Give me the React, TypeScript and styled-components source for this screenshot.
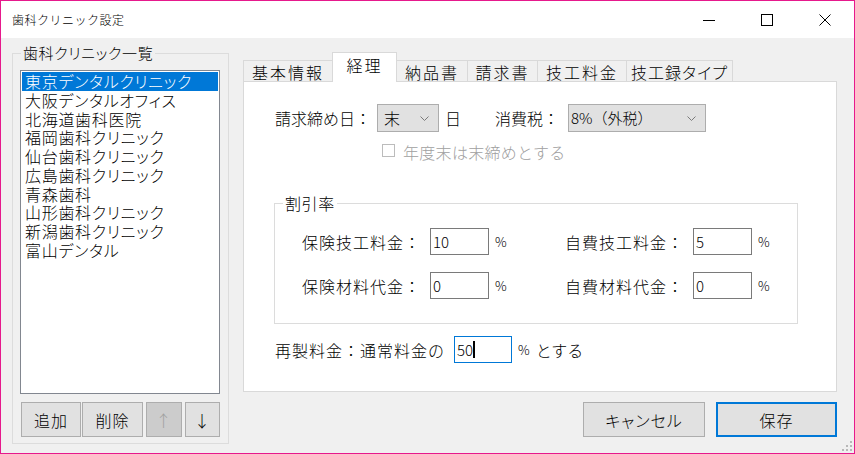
import React from 'react';
import styled, { createGlobalStyle, css } from 'styled-components';

const GlobalStyle = createGlobalStyle`
  html, body { margin: 0; padding: 0; background: #ffffff; }
  body { font-family: "Noto Sans CJK JP", "Noto Sans", sans-serif; color: #000; font-weight: 300; }
  * { box-sizing: border-box; }
`;

const FONT = `"Noto Sans CJK JP", "Noto Sans", sans-serif`;

const Window = styled.div`
  width: 855px;
  height: 454px;
  border: 1px solid #e6198c;
  display: flex;
  flex-direction: column;
  position: relative;
  background: #f0f0f0;
  overflow: hidden;
  font-family: ${FONT};
  font-weight: 300;
`;

const TitleBar = styled.div`
  height: 37px;
  background: #ffffff;
  display: flex;
  align-items: center;
  flex-shrink: 0;
`;

const Title = styled.div`
  flex: 1;
  padding-left: 11px;
  font-size: 12px;
  letter-spacing: 0.5px;
  line-height: 16px;
  padding-top: 1px;
`;

const Controls = styled.div`
  display: flex;
  height: 100%;
`;

const ControlButton = styled.div`
  width: 58px;
  height: 100%;
  display: flex;
  align-items: center;
  justify-content: center;
`;

const Body = styled.div`
  flex: 1;
  display: flex;
  padding: 14px 0 0 11px;
`;

const GroupBox = styled.div<{ $w: number; $h: number }>`
  position: relative;
  width: ${p => p.$w}px;
  height: ${p => p.$h}px;
  border: 1px solid #dcdcdc;
  flex-shrink: 0;
`;

const Legend = styled.span<{ $size: number; $bg: string }>`
  position: absolute;
  top: -11px;
  left: 8px;
  padding: 0 2px;
  line-height: 20px;
  font-size: ${p => p.$size}px;
  background: ${p => p.$bg};
  font-feature-settings: "palt";
  letter-spacing: 0.6px;
`;

const LeftGroup = styled(GroupBox)`
  margin-top: 1px;
  padding: 16px 8px 0 7px;
  display: flex;
  flex-direction: column;
`;

const ListBox = styled.div`
  height: 324px;
  border: 1px solid #828790;
  background: #ffffff;
  padding: 1px;
  display: flex;
  flex-direction: column;
`;

const ListItem = styled.div<{ $selected?: boolean }>`
  height: 18.75px;
  line-height: 18.75px;
  padding-left: 3px;
  font-size: 16px;
  font-feature-settings: "palt";
  letter-spacing: 0.7px;
  white-space: nowrap;
  ${p =>
    p.$selected &&
    css`
      background: #0078d7;
      color: #ffffff;
    `}
`;

const ListButtons = styled.div`
  display: flex;
  margin-top: 8px;
  padding-left: 1px;
`;

const Button = styled.div<{ $w: number; $gap?: number; $disabled?: boolean; $default?: boolean }>`
  width: ${p => p.$w}px;
  height: 35px;
  margin-left: ${p => p.$gap ?? 0}px;
  background: ${p => (p.$disabled ? '#cccccc' : '#e1e1e1')};
  border: ${p => (p.$default ? '2px solid #0078d7' : '1px solid #adadad')};
  color: ${p => (p.$disabled ? '#a0a0a0' : '#000000')};
  display: flex;
  align-items: center;
  justify-content: center;
  font-size: 16px;
  letter-spacing: 1px;
  font-feature-settings: "palt";
  flex-shrink: 0;
`;

const RightColumn = styled.div`
  width: 594px;
  margin-left: 14px;
  display: flex;
  flex-direction: column;
`;

const TabStrip = styled.div`
  height: 29px;
  display: flex;
  align-items: flex-end;
`;

const Tab = styled.div<{ $w: number; $selected?: boolean; $ls?: number }>`
  width: ${p => p.$w}px;
  height: 21px;
  margin-right: -1px;
  border: 1px solid #d9d9d9;
  border-bottom: none;
  background: #f0f0f0;
  display: flex;
  align-items: center;
  justify-content: center;
  font-size: 16px;
  letter-spacing: ${p => p.$ls ?? 2}px;
  font-feature-settings: "palt";
  padding-top: 1px;
  white-space: nowrap;
  ${p =>
    p.$selected &&
    css`
      height: 30px;
      margin-bottom: -1px;
      background: #ffffff;
      position: relative;
      z-index: 1;
      padding-bottom: 6px;
    `}
`;

const Panel = styled.div`
  height: 311px;
  border: 1px solid #d9d9d9;
  background: #ffffff;
  padding: 22px 0 0 31px;
  display: flex;
  flex-direction: column;
`;

const Row = styled.div`
  display: flex;
  align-items: center;
  height: 28px;
`;

const Label = styled.span<{ $gap?: number; $ls?: number; $w?: number }>`
  font-size: 16px;
  line-height: 20px;
  margin-left: ${p => p.$gap ?? 0}px;
  letter-spacing: ${p => p.$ls ?? 0}px;
  white-space: nowrap;
  ${p => p.$w !== undefined && css`width: ${p.$w}px; flex-shrink: 0;`}
`;

const Combo = styled.div<{ $w: number; $gap: number }>`
  width: ${p => p.$w}px;
  height: 28px;
  margin-left: ${p => p.$gap}px;
  background: #e1e1e1;
  border: 1px solid #adadad;
  display: flex;
  align-items: center;
  justify-content: space-between;
  padding: 0 9px 0 2px;
`;

const ComboText = styled.span<{ $size: number; $pad: number }>`
  font-size: ${p => p.$size}px;
  padding-left: ${p => p.$pad}px;
  line-height: 20px;
  white-space: nowrap;
`;

const CheckRow = styled.div`
  display: flex;
  align-items: center;
  margin-top: 10px;
  padding-left: 107px;
  height: 20px;
`;

const CheckBox = styled.span`
  width: 13px;
  height: 13px;
  border: 1px solid #bcbcbc;
  background: #ffffff;
  margin-top: -3px;
  flex-shrink: 0;
`;

const DisabledText = styled.span`
  margin-left: 8px;
  font-size: 16px;
  line-height: 20px;
  color: #a0a0a0;
  letter-spacing: 0.3px;
`;

const DiscountGroup = styled(GroupBox)`
  margin-top: 41px;
  margin-left: -1px;
  padding: 24px 0 0 27px;
`;

const FieldGrid = styled.div`
  display: grid;
  grid-template-columns: 263px auto;
  row-gap: 17px;
`;

const Field = styled.div`
  display: flex;
  align-items: center;
  height: 27px;
`;

const NumInput = styled.div<{ $w: number; $focused?: boolean; $gap?: number }>`
  width: ${p => p.$w}px;
  height: 27px;
  margin-left: ${p => p.$gap ?? 0}px;
  border: 1px solid ${p => (p.$focused ? '#0078d7' : '#7a7a7a')};
  background: #ffffff;
  display: flex;
  align-items: center;
  padding-left: 2px;
  font-size: 15px;
  line-height: 20px;
  flex-shrink: 0;
`;

const Caret = styled.span`
  width: 2px;
  height: 17px;
  background: #000000;
`;

const Percent = styled.span<{ $gap?: number }>`
  font-size: 13px;
  margin-left: ${p => p.$gap ?? 6}px;
  line-height: 16px;
`;

const RemakeRow = styled.div`
  display: flex;
  align-items: center;
  height: 27px;
  margin-top: 12px;
`;

const Footer = styled.div`
  display: flex;
  justify-content: flex-end;
  margin-top: 10px;
`;

const Grip = styled.svg`
  position: absolute;
  right: 2px;
  bottom: 2px;
`;

const Chevron = () => (
  <svg width="9" height="5" viewBox="0 0 9 5">
    <polyline points="0.5,0.5 4.5,4.5 8.5,0.5" fill="none" stroke="#7a7a7a" strokeWidth="1" />
  </svg>
);

const clinics = [
  '東京デンタルクリニック',
  '大阪デンタルオフィス',
  '北海道歯科医院',
  '福岡歯科クリニック',
  '仙台歯科クリニック',
  '広島歯科クリニック',
  '青森歯科',
  '山形歯科クリニック',
  '新潟歯科クリニック',
  '富山デンタル',
];

const tabs: { label: string; w: number; ls?: number }[] = [
  { label: '基本情報', w: 90 },
  { label: '経理', w: 65 },
  { label: '納品書', w: 72 },
  { label: '請求書', w: 71 },
  { label: '技工料金', w: 90 },
  { label: '技工録タイプ', w: 107, ls: 1 },
];

const fields = [
  { label: '保険技工料金：', value: '10' },
  { label: '自費技工料金：', value: '5' },
  { label: '保険材料代金：', value: '0' },
  { label: '自費材料代金：', value: '0' },
];

export default function App() {
  return (
    <>
      <GlobalStyle />
      <Window>
        <TitleBar>
          <Title>歯科クリニック設定</Title>
          <Controls>
            <ControlButton>
              <svg width="12" height="12" viewBox="0 0 12 12">
                <line x1="0" y1="6.5" x2="12" y2="6.5" stroke="#000" strokeWidth="1" />
              </svg>
            </ControlButton>
            <ControlButton>
              <svg width="12" height="12" viewBox="0 0 12 12">
                <rect x="0.5" y="0.5" width="11" height="11" fill="none" stroke="#000" strokeWidth="1" />
              </svg>
            </ControlButton>
            <ControlButton>
              <svg width="12" height="12" viewBox="0 0 12 12">
                <line x1="0.5" y1="0.5" x2="11.5" y2="11.5" stroke="#000" strokeWidth="1" />
                <line x1="11.5" y1="0.5" x2="0.5" y2="11.5" stroke="#000" strokeWidth="1" />
              </svg>
            </ControlButton>
          </Controls>
        </TitleBar>
        <Body>
          <LeftGroup $w={217} $h={391}>
            <Legend $size={15} $bg="#f0f0f0">歯科クリニック一覧</Legend>
            <ListBox>
              {clinics.map((c, i) => (
                <ListItem key={c} $selected={i === 0}>
                  {c}
                </ListItem>
              ))}
            </ListBox>
            <ListButtons>
              <Button $w={60}>追加</Button>
              <Button $w={61} $gap={1}>削除</Button>
              <Button $w={36} $gap={3} $disabled>↑</Button>
              <Button $w={35} $gap={3}>↓</Button>
            </ListButtons>
          </LeftGroup>
          <RightColumn>
            <TabStrip>
              {tabs.map(t => (
                <Tab key={t.label} $w={t.w} $ls={t.ls} $selected={t.label === '経理'}>
                  {t.label}
                </Tab>
              ))}
            </TabStrip>
            <Panel>
              <Row>
                <Label>請求締め日：</Label>
                <Combo $w={62} $gap={6}>
                  <ComboText $size={16} $pad={4}>末</ComboText>
                  <Chevron />
                </Combo>
                <Label $gap={6}>日</Label>
                <Label $gap={34}>消費税：</Label>
                <Combo $w={138} $gap={9}>
                  <ComboText $size={15} $pad={0}>8%（外税）</ComboText>
                  <Chevron />
                </Combo>
              </Row>
              <CheckRow>
                <CheckBox />
                <DisabledText>年度末は末締めとする</DisabledText>
              </CheckRow>
              <DiscountGroup $w={524} $h={121}>
                <Legend $size={16} $bg="#ffffff">割引率</Legend>
                <FieldGrid>
                  {fields.map(f => (
                    <Field key={f.label}>
                      <Label $w={128} $ls={1}>{f.label}</Label>
                      <NumInput $w={59}>{f.value}</NumInput>
                      <Percent>%</Percent>
                    </Field>
                  ))}
                </FieldGrid>
              </DiscountGroup>
              <RemakeRow>
                <Label $ls={1}>再製料金：通常料金の</Label>
                <NumInput $w={58} $gap={9} $focused>
                  50
                  <Caret />
                </NumInput>
                <Percent>%</Percent>
                <Label $gap={6}>とする</Label>
              </RemakeRow>
            </Panel>
            <Footer>
              <Button $w={122}>キャンセル</Button>
              <Button $w={121} $gap={11} $default>保存</Button>
            </Footer>
          </RightColumn>
        </Body>
        <Grip width="11" height="11" viewBox="0 0 11 11">
          {[
            [9, 1],
            [9, 5],
            [9, 9],
            [5, 5],
            [5, 9],
            [1, 9],
          ].map(([x, y]) => (
            <rect key={`${x}-${y}`} x={x} y={y} width="2" height="2" fill="#b8b8b8" />
          ))}
        </Grip>
      </Window>
    </>
  );
}
